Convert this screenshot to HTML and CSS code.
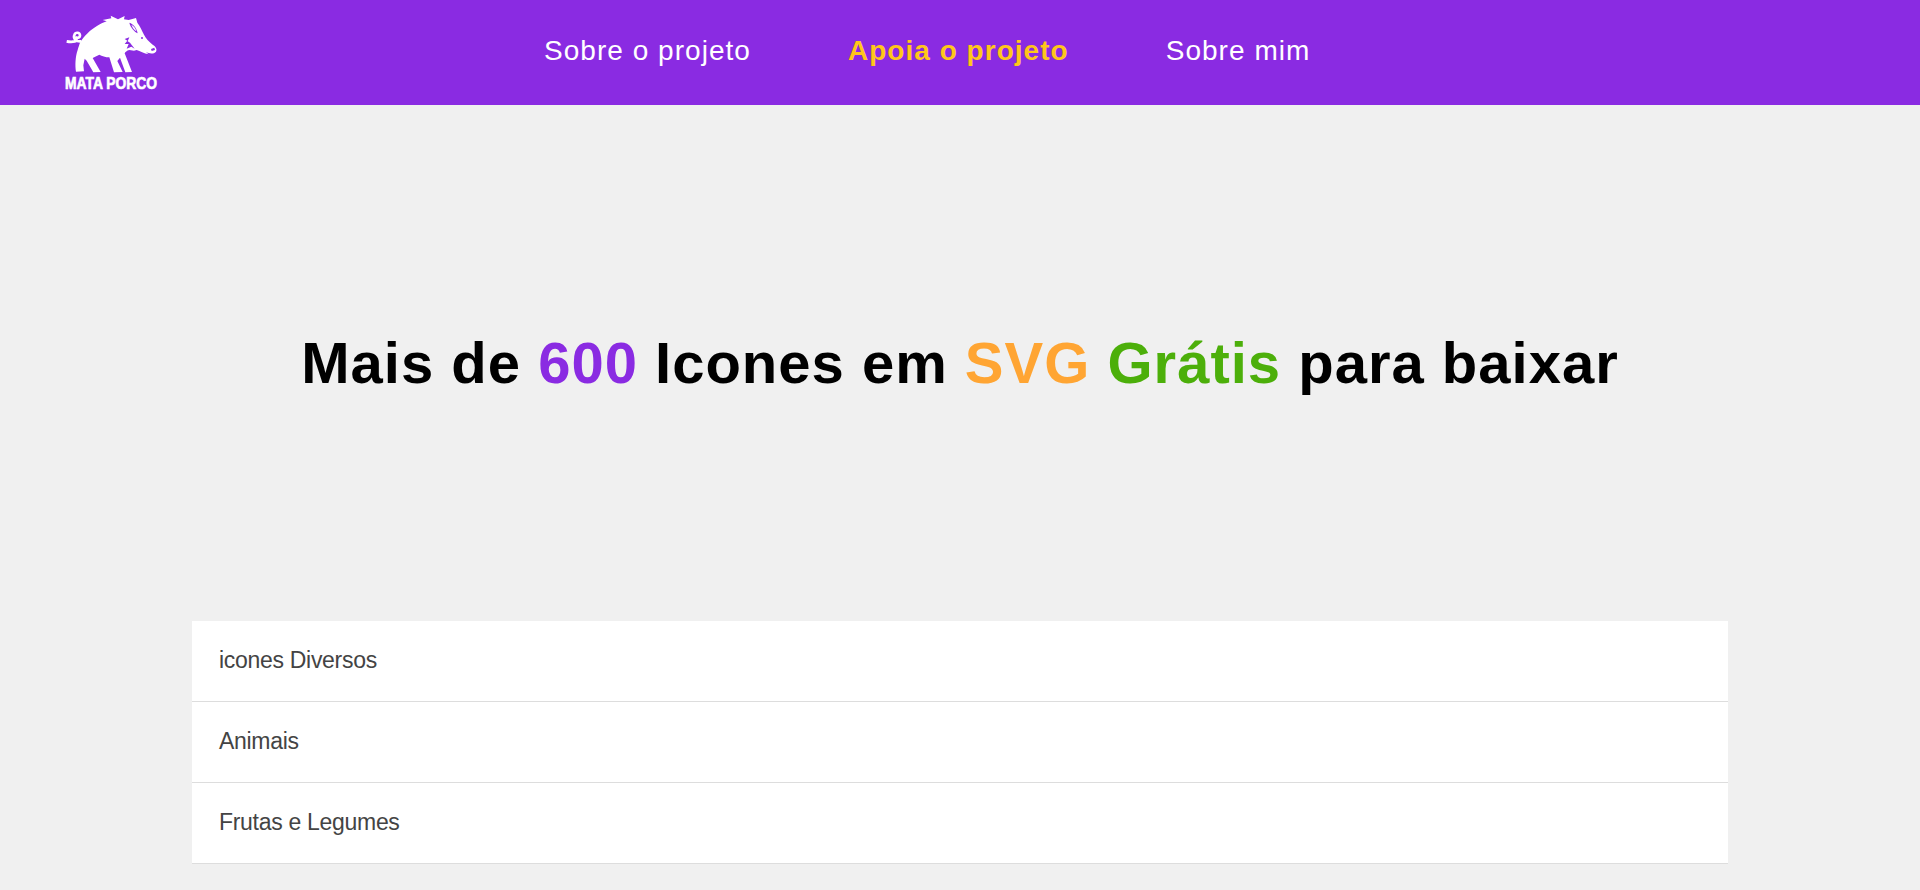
FILE: index.html
```html
<!DOCTYPE html>
<html lang="pt-BR">
<head>
    <meta charset="UTF-8">
    <meta name="viewport" content="width=device-width, initial-scale=1.0">
    <title>Mata Porco - Icones em SVG</title>
    <link rel="stylesheet" href="styles.css">
</head>
<body>
    <header class="topo">
        <a class="logo" href="#">
            <svg viewBox="0 0 420 315" width="140" height="105">
                <path class="rabo" d="M124 124 C108 126 99 116 103 105 C106 96 119 96 120 106 C120 114 110 116 107 110 M114 120 C106 125 94 127 80 124"/>
                <path class="porco" d="M120 128 C134 106 150 90 172 77 C180 72 190 68 200 64 L188 60 L214 55 L212 47 L234 58 L254 48 L252 58 L266 60 L288 54 L292 68 C300 78 306 92 312 104 C318 116 326 124 338 134 C348 140 352 148 348 155 C342 162 330 162 318 157 L326 163 C312 160 300 154 290 150 L282 152 L268 150 C260 152 256 156 254 160 L276 216 L256 217 L240 173 L232 183 L248 216 L222 217 L208 172 C196 172 186 168 178 164 L158 174 L182 216 L160 217 L140 182 L134 176 L130 196 L132 214 L108 215 C105 196 106 170 113 150 C115 142 118 134 120 128 Z"/>
                <path class="detalhe" d="M268 68 C280 72 290 84 293 100 C284 96 272 84 268 68 Z"/>
                <path class="porco" d="M274 74 C282 78 287 85 289 94 C283 90 277 83 274 74 Z"/>
                <circle class="detalhe" cx="306" cy="114" r="3"/>
                <path class="detalhe" d="M333 147 L343 143 L345 150 L335 153 Z"/>
                <path class="detalhe" d="M268 112 L254 117 L262 122 L254 132 L266 132 L260 146 L274 140 L284 146 L270 128 L263 124 Z"/>
                <text class="logo-nome" x="75" y="268" textLength="276" lengthAdjust="spacingAndGlyphs">MATA PORCO</text>
            </svg>
        </a>
        <nav class="menu">
            <a href="#">Sobre o projeto</a>
            <a class="destaque" href="#">Apoia o projeto</a>
            <a href="#">Sobre mim</a>
        </nav>
    </header>

    <section class="chamada">
        <h1>Mais de <span class="roxo">600</span> Icones em <span class="laranja">SVG</span> <span class="verde">Grátis</span> para baixar</h1>
    </section>

    <ul class="categorias">
        <li>icones Diversos</li>
        <li>Animais</li>
        <li>Frutas e Legumes</li>
    </ul>
</body>
</html>
```

FILE: styles.css
```css
* {
    box-sizing: border-box;
}

body {
    font-family: "Liberation Sans", Arial, sans-serif;
    background-color: #f0f0f0;
    margin: 0;
    padding: 0;
    height: 890px;
    overflow: hidden;
}

.topo {
    display: flex;
    background-color: #8a2be2;
    height: 105px;
    padding-left: 40px;
}

.logo {
    display: block;
    height: 105px;
}

.logo svg {
    display: block;
}

.porco {
    fill: #fff;
}

.rabo {
    fill: none;
    stroke: #fff;
    stroke-width: 8;
}

.detalhe {
    fill: #8a2be2;
}

.logo-nome {
    font-family: "Liberation Sans", Arial, sans-serif;
    font-weight: bold;
    font-size: 50px;
    fill: #fff;
    stroke: #fff;
    stroke-width: 2;
}

.menu {
    display: flex;
    gap: 97px;
    margin-left: 364px;
    padding-top: 33px;
}

.menu a {
    color: #fff;
    font-size: 28px;
    line-height: 36px;
    letter-spacing: 1.03px;
    text-decoration: none;
}

.menu a.destaque {
    color: #ffc61a;
    font-weight: bold;
}

.chamada {
    height: 516px;
    padding-top: 225px;
}

h1 {
    margin: 0;
    text-align: center;
    color: #000;
    font-size: 58px;
    line-height: 66px;
    letter-spacing: 1px;
    font-weight: bold;
}

.roxo {
    color: #8a2be2;
}

.laranja {
    color: #ffa533;
}

.verde {
    color: #4caf0a;
}

.categorias {
    list-style: none;
    margin: 0 192px;
    padding: 0;
}

.categorias li {
    background-color: #fff;
    height: 81px;
    padding: 0 27px;
    line-height: 79px;
    font-size: 23px;
    letter-spacing: -0.3px;
    color: #444;
    border-bottom: 1px solid #ddd;
}
```
